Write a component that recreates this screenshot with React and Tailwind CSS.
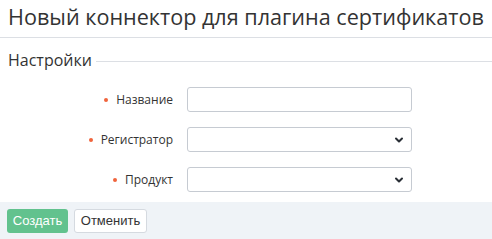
import { ChevronDown } from 'lucide-react';

const fields = [
  { label: 'Название', type: 'input' },
  { label: 'Регистратор', type: 'select' },
  { label: 'Продукт', type: 'select' },
];

export default function App() {
  return (
    <div
      className="flex flex-col w-[492px] h-[239px] bg-white text-[#333] overflow-hidden"
      style={{ fontFamily: '"Open Sans", sans-serif' }}
    >
      <div className="px-2 pt-[2px] pb-[5px] text-[21.6px] leading-[30px] whitespace-nowrap text-[#333] border-b border-[#dcdfe4]">
        Новый коннектор для плагина сертификатов
      </div>
      <div className="flex items-center pl-2 mt-[11px]">
        <span className="text-[16px] leading-[22px] text-[#333]">Настройки</span>
        <div className="flex-1 ml-1 border-t border-[#dcdfe4] mt-[2px]"></div>
      </div>
      <div className="flex flex-col gap-[15px] mt-[16px]">
        {fields.map((f) => (
          <div key={f.label} className="flex items-center">
            <div className="w-[173px] flex items-center justify-end text-[12px]">
              <span className="w-[4px] h-[4px] rounded-full bg-[#f0643c] mr-[8px]"></span>
              {f.label}
            </div>
            <div className="ml-[14px] relative w-[225px] h-[25px] border border-[#c6cbd2] rounded-[3px] bg-white">
              {f.type === 'select' && (
                <ChevronDown
                  size={12}
                  strokeWidth={4}
                  className="absolute right-[6px] top-[6px] text-[#2a2f36]"
                />
              )}
            </div>
          </div>
        ))}
      </div>
      <div className="mt-auto h-[37px] shrink-0 bg-[#eff3f7] flex items-center gap-[6px] px-[7px]">
        <button
          className="h-[24px] w-[61px] rounded-[3px] bg-[#62c28e] text-white text-[13px]"
          style={{ fontFamily: '"Liberation Sans", sans-serif' }}
        >
          Создать
        </button>
        <button
          className="h-[24px] w-[73px] rounded-[3px] bg-white border border-[#d5dae0] text-[#333] text-[13px]"
          style={{ fontFamily: '"Liberation Sans", sans-serif' }}
        >
          Отменить
        </button>
      </div>
    </div>
  );
}
